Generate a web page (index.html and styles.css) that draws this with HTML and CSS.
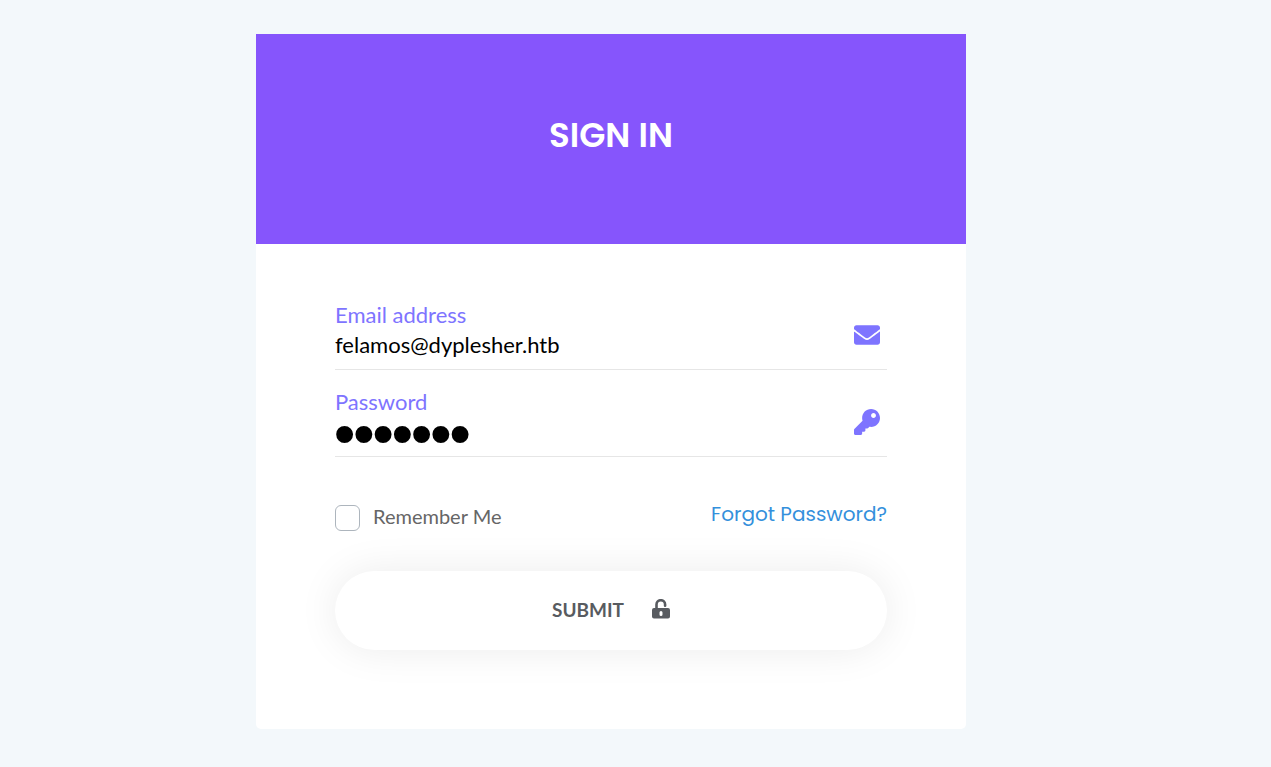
FILE: index.html
```html
<!DOCTYPE html>
<html lang="en">
<head>
<meta charset="utf-8">
<meta name="viewport" content="width=device-width, initial-scale=1">
<title>Sign In</title>
<link rel="stylesheet" href="styles.css">
</head>
<body>
<main class="card">
  <header class="card-header">
    <h1 class="title">SIGN IN</h1>
  </header>
  <form class="form">
    <div class="field">
      <div class="field-text">
        <label class="label" for="email">Email address</label>
        <input class="input" id="email" type="email" value="felamos@dyplesher.htb">
      </div>
      <svg class="field-icon" viewBox="0 0 512 512" aria-hidden="true"><path d="M502.300 190.800c3.900-3.100 9.700-.2 9.700 4.700V400c0 26.500-21.500 48-48 48H48c-26.500 0-48-21.500-48-48V195.600c0-5 5.700-7.800 9.700-4.700 22.400 17.400 52.100 39.500 154.100 113.600 21.100 15.400 56.700 47.800 92.200 47.600 35.700.3 72-32.800 92.300-47.600 102-74.100 131.600-96.300 154-113.700zM256 320c23.200.4 56.600-29.200 73.400-41.400 132.700-96.300 142.800-104.700 173.400-128.700 5.800-4.500 9.200-11.500 9.200-18.900v-19c0-26.500-21.500-48-48-48H48c-26.500 0-48 21.500-48 48v19c0 7.400 3.400 14.300 9.200 18.900 30.600 23.900 40.700 32.400 173.400 128.700 16.800 12.200 50.200 41.800 73.400 41.400z"/></svg>
    </div>
    <div class="field">
      <div class="field-text">
        <label class="label" for="password">Password</label>
        <input class="input input-password" id="password" type="password" value="felamos">
      </div>
      <svg class="field-icon" viewBox="0 0 512 512" aria-hidden="true"><path d="M512 176c0 97.200-78.800 176-176 176-11.200 0-22.200-1.100-32.800-3.100l-24 27A24 24 0 0 1 261.200 384H224v40c0 13.300-10.700 24-24 24h-40v40c0 13.300-10.700 24-24 24H24c-13.300 0-24-10.700-24-24v-78.100c0-6.400 2.500-12.500 7-17l161.800-161.800C163 213.800 160 195.300 160 176 160 78.800 238.800 0 336 0 433.500 0 512 78.500 512 176zM336 128c0 26.500 21.500 48 48 48s48-21.500 48-48-21.500-48-48-48-48 21.500-48 48z"/></svg>
    </div>
    <div class="options">
      <div class="remember">
        <input class="checkbox" id="remember" type="checkbox">
        <label class="remember-label" for="remember">Remember Me</label>
      </div>
      <a class="forgot" href="#">Forgot Password?</a>
    </div>
    <button class="submit" type="submit">
      <span>SUBMIT</span>
      <svg class="lock" viewBox="0 0 18 20" aria-hidden="true"><path class="shackle" d="M4.500 10V5.500a4.300 4.300 0 0 1 8.600 0v1.300"/><path fill-rule="evenodd" d="M2 9h14a2 2 0 0 1 2 2v6.500a2 2 0 0 1-2 2H2a2 2 0 0 1-2-2V11a2 2 0 0 1 2-2zM9 12a1.500 1.500 0 0 0-1.500 1.500v2a1.500 1.500 0 0 0 3 0v-2A1.500 1.500 0 0 0 9 12z"/></svg>
    </button>
  </form>
</main>
</body>
</html>
```
FILE: styles.css
```css
* { box-sizing: border-box; }
body {
  margin: 0;
  padding: 34px 49px 38px 0;
  background: #f3f8fb;
  font-family: Lato, "Liberation Sans", sans-serif;
  font-size: 22px;
}
.card {
  width: 100%;
  max-width: 710px;
  margin: 0 auto;
  background: #fff;
  border-radius: 0 0 5px 5px;
}
.card-header {
  padding: 76px 24px 84px;
  background: #8655fc;
  text-align: center;
}
.title {
  margin: 0;
  color: #fff;
  font-family: Poppins, Inter, sans-serif;
  font-size: 34px;
  font-weight: 600;
  line-height: 50px;
}
.form { padding: 56px 79px 79px; }
.field {
  display: flex;
  align-items: center;
  height: 70px;
  margin-bottom: 17px;
  padding-right: 7px;
  border-bottom: 1px solid #e6e6e6;
}
.field-text {
  display: flex;
  flex: 1;
  flex-direction: column;
  height: 100%;
  min-width: 0;
}
.label { color: #7e74ff; line-height: 30px; }
.input {
  width: 100%;
  height: 28px;
  padding: 0;
  border: 0;
  outline: 0;
  background: transparent;
  color: #000;
  font: inherit;
}
.input-password {
  height: 34px;
  font-family: "Liberation Sans", sans-serif;
  font-size: 55px;
  line-height: 34px;
  -webkit-text-stroke: 2px #000;
}
.field-icon { flex: none; width: 26px; height: 26px; fill: #7e74ff; }
.options {
  display: flex;
  align-items: flex-start;
  justify-content: space-between;
  margin: 48px 0 40px;
}
.remember { display: flex; align-items: flex-start; gap: 13px; }
.checkbox {
  width: 25px;
  height: 26px;
  margin: 0;
  appearance: none;
  background: #fff;
  border: 1px solid #adb5bd;
  border-radius: 6px;
}
.checkbox:checked { background: #7e74ff; }
.remember-label { color: #666; font-size: 20px; line-height: 22px; }
.forgot {
  color: #3490dc;
  font-family: Poppins, Inter, sans-serif;
  font-size: 20px;
  line-height: 18px;
  text-decoration: none;
}
.submit {
  display: flex;
  align-items: center;
  justify-content: center;
  gap: 28px;
  width: 100%;
  height: 79px;
  padding: 0 0 3px;
  border: 0;
  border-radius: 40px;
  background: #fff;
  box-shadow: 0 0 40px rgba(0, 0, 0, 0.08);
  color: #585b60;
  font: bold 19px Lato, "Liberation Sans", sans-serif;
}
.lock { width: 18px; height: 20px; fill: #585b60; }
.shackle { fill: none; stroke: #585b60; stroke-width: 2.6; stroke-linecap: round; }
```
